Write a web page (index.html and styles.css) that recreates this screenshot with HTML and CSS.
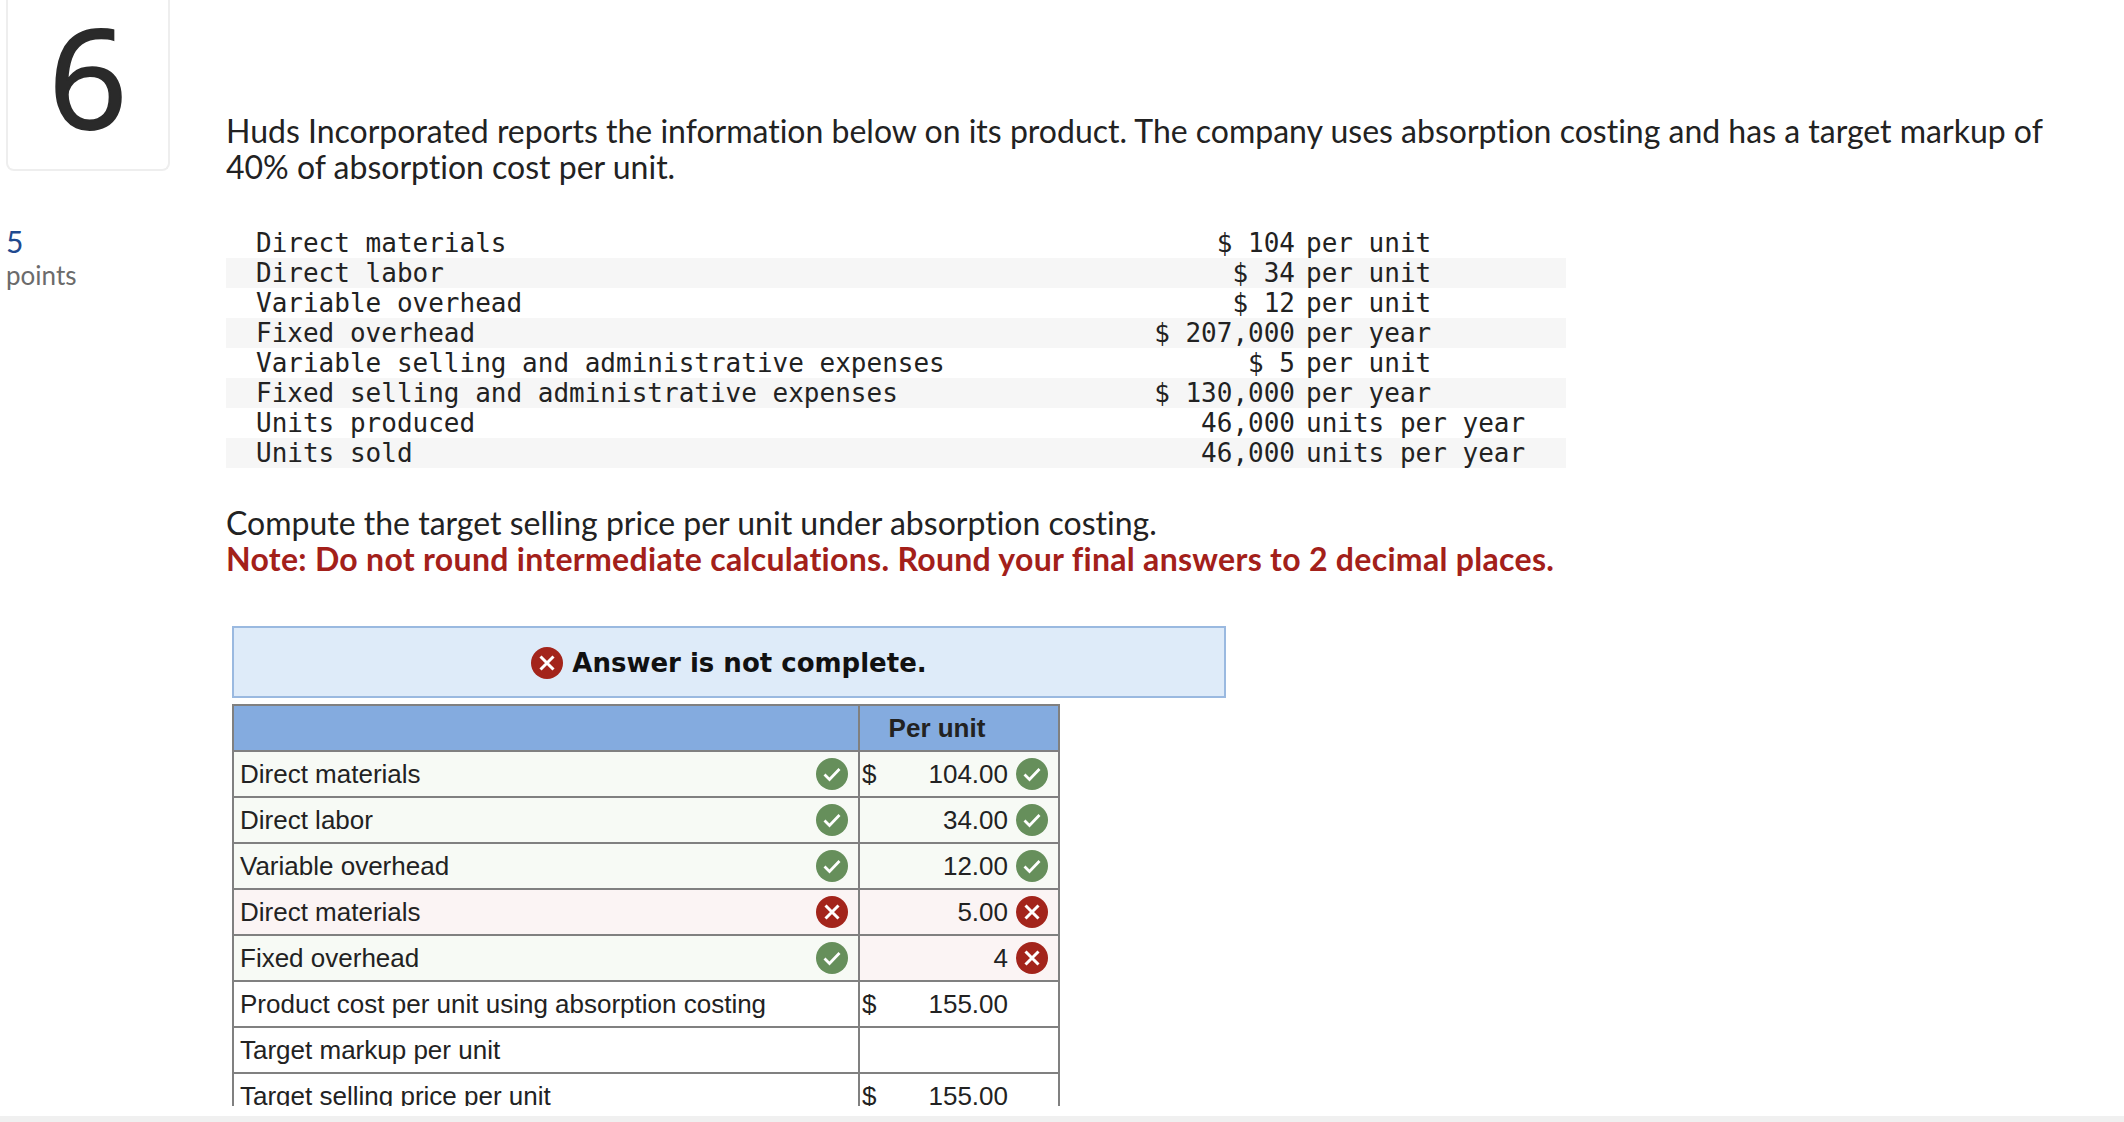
FILE: index.html
```html
<!DOCTYPE html>
<html lang="en">
<head>
<meta charset="utf-8">
<title>Question 6</title>
<link rel="stylesheet" href="styles.css">
</head>
<body>
<svg class="defs" width="0" height="0" aria-hidden="true">
  <symbol id="ok" viewBox="0 0 32 32"><circle cx="16" cy="16" r="16" fill="#668f5b"/><path d="M8.5 16.5l5 5L23.5 11" fill="none" stroke="#fff" stroke-width="2.8"/></symbol>
  <symbol id="no" viewBox="0 0 32 32"><circle cx="16" cy="16" r="16" fill="#a3241b"/><path d="M9.5 9.5l13 13M22.5 9.5l-13 13" fill="none" stroke="#fff" stroke-width="3"/></symbol>
</svg>
<div class="page">
  <div class="main">
    <aside class="side">
      <div class="num-card">6</div>
      <div class="pts-num">5</div>
      <div class="pts-label">points</div>
    </aside>
    <section class="content">
      <p class="para">Huds Incorporated reports the information below on its product. The company uses absorption costing and has a target markup of<br>40% of absorption cost per unit.</p>
      <div class="data">
        <div class="data-row"><span class="lbl">Direct materials</span><span class="amt"><span>$</span><span>104</span></span><span>per unit</span></div>
        <div class="data-row"><span class="lbl">Direct labor</span><span class="amt"><span>$</span><span>34</span></span><span>per unit</span></div>
        <div class="data-row"><span class="lbl">Variable overhead</span><span class="amt"><span>$</span><span>12</span></span><span>per unit</span></div>
        <div class="data-row"><span class="lbl">Fixed overhead</span><span class="amt"><span>$</span><span>207,000</span></span><span>per year</span></div>
        <div class="data-row"><span class="lbl">Variable selling and administrative expenses</span><span class="amt"><span>$</span><span>5</span></span><span>per unit</span></div>
        <div class="data-row"><span class="lbl">Fixed selling and administrative expenses</span><span class="amt"><span>$</span><span>130,000</span></span><span>per year</span></div>
        <div class="data-row"><span class="lbl">Units produced</span><span class="amt"><span>46,000</span></span><span>units per year</span></div>
        <div class="data-row"><span class="lbl">Units sold</span><span class="amt"><span>46,000</span></span><span>units per year</span></div>
      </div>
      <p class="para ask">Compute the target selling price per unit under absorption costing.<br><strong class="note">Note: Do not round intermediate calculations. Round your final answers to 2 decimal places.</strong></p>
      <div class="banner"><svg class="ico"><use href="#no"/></svg><span>Answer is not complete.</span></div>
      <div class="clip">
        <table class="ans">
          <colgroup><col class="c1"><col class="c2"></colgroup>
          <tr class="head"><th></th><th class="per">Per unit</th></tr>
          <tr>
            <td class="good"><div class="cell"><span>Direct materials</span><svg class="ico push"><use href="#ok"/></svg></div></td>
            <td class="good"><div class="val"><span>$</span><span class="n">104.00</span><svg class="ico"><use href="#ok"/></svg></div></td>
          </tr>
          <tr>
            <td class="good"><div class="cell"><span>Direct labor</span><svg class="ico push"><use href="#ok"/></svg></div></td>
            <td class="good"><div class="val"><span class="n">34.00</span><svg class="ico"><use href="#ok"/></svg></div></td>
          </tr>
          <tr>
            <td class="good"><div class="cell"><span>Variable overhead</span><svg class="ico push"><use href="#ok"/></svg></div></td>
            <td class="good"><div class="val"><span class="n">12.00</span><svg class="ico"><use href="#ok"/></svg></div></td>
          </tr>
          <tr>
            <td class="bad"><div class="cell"><span>Direct materials</span><svg class="ico push"><use href="#no"/></svg></div></td>
            <td class="bad"><div class="val"><span class="n">5.00</span><svg class="ico"><use href="#no"/></svg></div></td>
          </tr>
          <tr>
            <td class="good"><div class="cell"><span>Fixed overhead</span><svg class="ico push"><use href="#ok"/></svg></div></td>
            <td class="bad"><div class="val"><span class="n">4</span><svg class="ico"><use href="#no"/></svg></div></td>
          </tr>
          <tr>
            <td><div class="cell"><span>Product cost per unit using absorption costing</span></div></td>
            <td class="total"><div class="val"><span>$</span><span class="n">155.00</span><span class="slot"></span></div></td>
          </tr>
          <tr>
            <td><div class="cell"><span>Target markup per unit</span></div></td>
            <td><div class="val"></div></td>
          </tr>
          <tr>
            <td><div class="cell"><span>Target selling price per unit</span></div></td>
            <td class="total"><div class="val"><span>$</span><span class="n">155.00</span><span class="slot"></span></div></td>
          </tr>
        </table>
      </div>
    </section>
  </div>
  <div class="strip"></div>
</div>
</body>
</html>
```
FILE: styles.css
```css
* { box-sizing: border-box; }
html, body { margin: 0; padding: 0; background: #fff; }
body { color: #222; font-family: Lato, "Liberation Sans", sans-serif; overflow: hidden; }
.defs { display: block; height: 0; }
.page { height: 1122px; display: flex; flex-direction: column; overflow: hidden; }
.main { flex: 1; display: flex; min-height: 0; }
.strip { height: 6px; background: #f0f0f0; }

.side { width: 226px; flex: none; padding-left: 6px; }
.num-card {
  width: 164px; height: 171px;
  border: 2px solid #eeeeee; border-top: 0; border-radius: 0 0 8px 8px;
  font-family: "Open Sans", Lato, sans-serif;
  font-size: 138px; line-height: 150px; text-align: center; color: #2a2a2a;
  -webkit-text-stroke: 2px #2a2a2a;
}
.pts-num { margin-top: 52px; font-size: 30px; line-height: 36px; color: #1f4a8f; }
.pts-label { font-size: 26px; line-height: 30px; color: #6b6b6b; margin-top: 1px; }

.content { flex: 1; min-width: 0; padding-top: 113px; }
.para { margin: 0; font-size: 32px; line-height: 36px; color: #222; font-variant-ligatures: none; white-space: nowrap; }
.ask { margin-top: 37px; }
.note { color: #a3201a; font-weight: 700; letter-spacing: 0.3px; }

.data { margin-top: 43px; width: 1340px; font-family: "DejaVu Sans Mono", "Liberation Mono", monospace; font-size: 26px; color: #222; }
.data-row { display: flex; height: 30px; line-height: 30px; padding-left: 30px; white-space: pre; }
.data-row:nth-child(even) { background: #f6f6f6; }
.lbl { width: 778px; }
.amt { width: 261px; margin-right: 11px; display: flex; justify-content: flex-end; gap: 15.65px; }

.banner {
  margin: 49px 0 0 6px; width: 994px; height: 72px; padding-top: 2px;
  border: 2px solid #9ab9e0; background: #deebf9;
  display: flex; align-items: center; justify-content: center; gap: 9px;
  font-family: "DejaVu Sans", sans-serif; font-weight: 700; font-size: 26px; color: #111;
}
.ico { width: 32px; height: 32px; flex: none; display: block; }

.clip { margin: 6px 0 0 6px; height: 402px; overflow: hidden; }
.ans { border-collapse: collapse; table-layout: fixed; width: 826px; font-family: "Liberation Sans", Arial, sans-serif; font-size: 26px; color: #222; }
.c1 { width: 626px; }
.c2 { width: 200px; }
.ans th, .ans td { border: 2px solid #808080; padding: 0; height: 46px; }
.head th { background: #84abdf; font-weight: 700; }
.ans th.per { padding-right: 44px; }
.good { background: #f7faf5; }
.bad { background: #fbf4f4; }
.ans td.total { border-top: 2px solid #000; }
.cell { display: flex; align-items: center; padding: 0 10px 0 6px; height: 44px; }
.push { margin-left: auto; }
.val { display: flex; align-items: center; height: 44px; padding: 0 10px 0 2px; }
.n { margin-left: auto; margin-right: 8px; }
.slot { width: 32px; flex: none; }
```
